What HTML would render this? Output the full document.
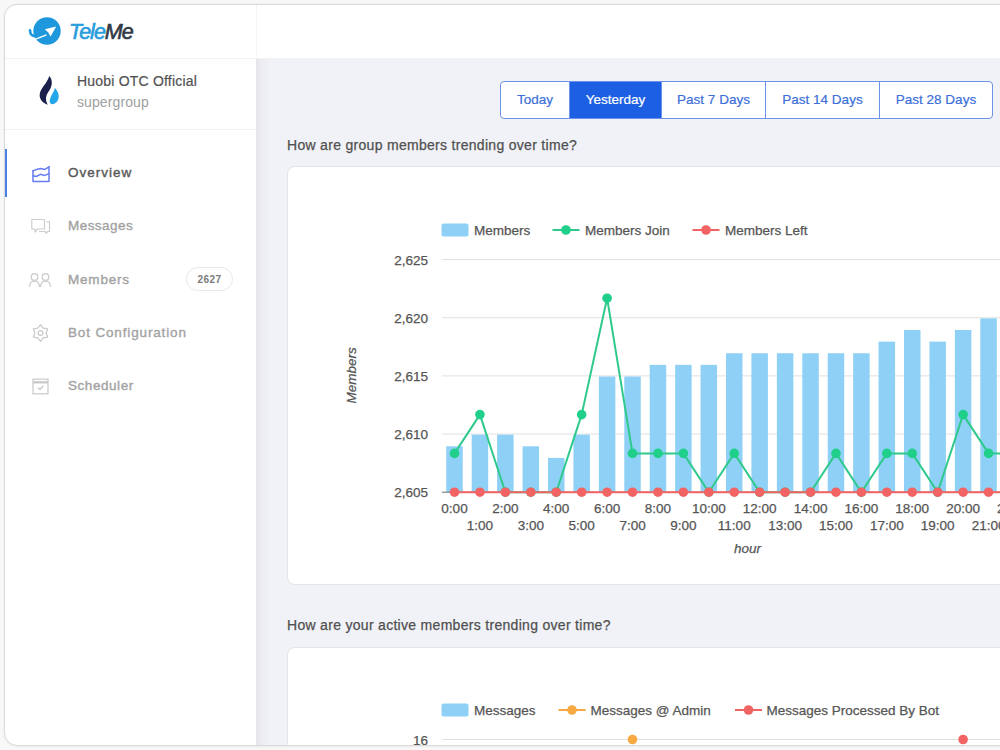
<!DOCTYPE html>
<html><head><meta charset="utf-8">
<style>
html,body{margin:0;padding:0;width:1000px;height:750px;overflow:hidden;background:#f8f8f8;font-family:"Liberation Sans",sans-serif;}
*{box-sizing:border-box;}
.abs{position:absolute;}
#frame{position:absolute;left:4px;top:4px;width:1200px;height:742px;border:1px solid #dadada;border-radius:13px;background:#fff;box-shadow:0 0 3px rgba(0,0,0,0.06);}
#hdrline{position:absolute;left:5px;top:58px;width:1000px;height:1px;background:#f2f2f2;}
#sideline{position:absolute;left:256px;top:5px;width:1px;height:54px;background:#f4f4f4;}
#main{position:absolute;left:257px;top:59px;width:743px;height:686px;background:#f1f2f7;}
#mainshadow{position:absolute;left:256px;top:59px;width:14px;height:686px;background:linear-gradient(to right,#e5e5e9,#ececf1 40%,#f1f2f7);}
#grpline{position:absolute;left:5px;top:129px;width:251px;height:1px;background:#f1f1f1;}
.brand{position:absolute;left:69px;top:19.5px;font-size:21.5px;font-style:italic;font-weight:normal;letter-spacing:-1px;-webkit-text-stroke:0.65px currentColor;}
.brand .t{color:#2a9ddc;}
.brand .m{color:#333a45;}
.gname{position:absolute;left:77px;top:73px;font-size:14px;letter-spacing:0.2px;-webkit-text-stroke:0.2px currentColor;color:#525252;white-space:nowrap;}
.gsub{position:absolute;left:77px;top:94px;font-size:14px;letter-spacing:0.1px;color:#a0a0a0;white-space:nowrap;}
.active{position:absolute;left:5px;top:149px;width:2px;height:48px;background:#4b82e8;}
.nav{position:absolute;left:67px;font-size:13.5px;font-weight:normal;-webkit-text-stroke:0.38px currentColor;color:#a3a3a3;letter-spacing:0.55px;white-space:nowrap;}
.nav.on{color:#585858;}
.badge{position:absolute;left:186px;top:267px;width:47px;height:24px;border:1.5px solid #e8e8e8;border-radius:12px;font-size:10px;font-weight:bold;color:#7a7a7a;text-align:center;line-height:23px;letter-spacing:0.5px;}
.btns{position:absolute;left:500px;top:81px;height:38px;display:flex;border:1px solid #6b93ea;border-radius:4px;overflow:hidden;background:#fff;}
.btn{height:36px;line-height:36px;font-size:13.5px;color:#3b6fd9;-webkit-text-stroke:0.2px currentColor;text-align:center;border-right:1px solid #6b93ea;white-space:nowrap;}
.btn:last-child{border-right:none;}
.btn.on{background:#1d5fe3;color:#fff;}
.q{position:absolute;left:287px;font-size:14px;letter-spacing:0.3px;-webkit-text-stroke:0.25px currentColor;color:#505050;white-space:nowrap;}
.card{position:absolute;left:287px;width:800px;background:#fff;border:1px solid #e4e5ea;border-radius:8px;}
svg{position:absolute;left:0;top:0;}
.ct{font-family:"Liberation Sans",sans-serif;font-size:13.5px;fill:#555;stroke:#555;stroke-width:0.25px;}
.it{font-style:italic;}
</style></head><body>
<div id="frame"></div>
<div id="main"></div>
<div id="mainshadow"></div>
<div id="hdrline"></div>
<div id="sideline"></div>
<div id="grpline"></div>

<!-- logo -->
<svg width="1000" height="750" style="pointer-events:none">
  <g>
    <circle cx="47" cy="31" r="13.7" fill="#1f97dc"/>
    <path d="M30 30.2 C30 34.5 32.5 36.6 37 36.4 L41 36" fill="none" stroke="#1f97dc" stroke-width="2.6" stroke-linecap="round"/>
    <path d="M35 39.3 L46.5 34.8" stroke="#fff" stroke-width="1.4"/>
    <path d="M44.8 29.2 L56.2 26.6 L50.6 36.5 L48.3 32.4 Z" fill="#fff"/>
  </g>
  <!-- huobi -->
  <path d="M49.3 76 C52.8 80 52.8 86 48.6 91.5 C45.5 96 45.2 100.5 47.8 104.7 C42.5 103 39.3 99 39.7 94.5 C40.2 88 47 84 49.3 76 Z" fill="#1b1f4b"/>
  <path d="M55 88 C57.5 91 59 94 58.7 97 C58.3 101.5 55 104.3 52 104.2 C50 104 49.3 101.5 49.9 99.5 C51 95 54 92 55 88 Z" fill="#23a6ea"/>
  <!-- nav icons -->
  <g fill="none" stroke="#687ef0" stroke-width="1.5" stroke-linejoin="round" stroke-linecap="round">
    <path d="M33 170.8 L33 181.5 L49 181.5 L49 166.8"/>
    <path d="M33 170.8 L36.4 169.6 L40.4 168.6 L44.8 169.4 L49 166.8"/>
    <path d="M33 175.8 L36.2 176.5 L40.4 174.3 L44.8 175.4 L49 173.6"/>
  </g>
  <g fill="none" stroke="#cdcdcd" stroke-width="1.2" stroke-linejoin="round">
    <path d="M31.8 219.5 L44.5 219.5 L44.5 229 L37.5 229 L35 232 L35 229 L31.8 229 Z"/>
    <path d="M46.5 221.8 L49.5 221.8 L49.5 231.5 L47.5 231.5 L46.5 233.3 L44.8 231.5 L39 231.5"/>
  </g>
  <g fill="none" stroke="#cbcbcb" stroke-width="1.25">
    <circle cx="34.5" cy="277" r="3.3"/>
    <path d="M29.5 287 C29.5 282.5 31.5 281 34.5 281 C37.5 281 39.5 282.5 39.5 287"/>
    <circle cx="45.5" cy="277" r="3.3"/>
    <path d="M40.5 287 C40.5 282.5 42.5 281 45.5 281 C48.5 281 50.5 282.5 50.5 287"/>
  </g>
  <g fill="none" stroke="#cbcbcb" stroke-width="1.25">
    <path d="M40.50 324.70 L43.30 328.15 L47.69 328.85 L46.10 333.00 L47.69 337.15 L43.30 337.85 L40.50 341.30 L37.70 337.85 L33.31 337.15 L34.90 333.00 L33.31 328.85 L37.70 328.15 Z" stroke-linejoin="round"/>
    <circle cx="40.5" cy="333" r="2.4"/>
  </g>
  <g fill="none" stroke="#cbcbcb" stroke-width="1.25">
    <rect x="33" y="379.2" width="15" height="14.6"/>
    <path d="M33 382.3 L48 382.3" stroke-width="2.4"/>
    <path d="M38 387.5 L40 389.5 L43.5 385.8" stroke-width="1.5"/>
  </g>
</svg>

<div class="brand"><span class="t">Tele</span><span class="m">Me</span></div>
<div class="gname">Huobi OTC Official</div>
<div class="gsub">supergroup</div>

<div class="active"></div>
<div class="nav on" style="top:165px;left:68px;letter-spacing:1.0px">Overview</div>
<div class="nav" style="top:218px;left:68px;letter-spacing:0.45px">Messages</div>
<div class="nav" style="top:272px;left:68px;letter-spacing:0.8px">Members</div>
<div class="badge">2627</div>
<div class="nav" style="top:325px;left:68px;letter-spacing:0.85px">Bot Configuration</div>
<div class="nav" style="top:378px;left:68px;letter-spacing:0.55px">Scheduler</div>

<div class="btns">
  <div class="btn" style="width:69px">Today</div>
  <div class="btn on" style="width:92px">Yesterday</div>
  <div class="btn" style="width:104px">Past 7 Days</div>
  <div class="btn" style="width:114px">Past 14 Days</div>
  <div class="btn" style="width:112px">Past 28 Days</div>
</div>

<div class="q" style="top:137px">How are group members trending over time?</div>
<div class="card" style="top:166px;height:419px"></div>
<div class="q" style="top:617px">How are your active members trending over time?</div>
<div class="card" style="top:647px;height:120px"></div>

<svg width="1000" height="745" viewBox="0 0 1000 745">
<line x1="441.8" y1="259.6" x2="1060" y2="259.6" stroke="#e0e0e0" stroke-width="1"/>
<line x1="441.8" y1="317.75" x2="1060" y2="317.75" stroke="#e0e0e0" stroke-width="1"/>
<line x1="441.8" y1="375.9" x2="1060" y2="375.9" stroke="#e0e0e0" stroke-width="1"/>
<line x1="441.8" y1="434.05" x2="1060" y2="434.05" stroke="#e0e0e0" stroke-width="1"/>
<text x="428" y="264.6" text-anchor="end" class="ct">2,625</text>
<text x="428" y="322.8" text-anchor="end" class="ct">2,620</text>
<text x="428" y="380.9" text-anchor="end" class="ct">2,615</text>
<text x="428" y="439.1" text-anchor="end" class="ct">2,610</text>
<text x="428" y="497.2" text-anchor="end" class="ct">2,605</text>
<rect x="446.26" y="446.28" width="16.5" height="45.92" fill="#8fd1f6"/>
<rect x="471.69" y="434.65" width="16.5" height="57.55" fill="#8fd1f6"/>
<rect x="497.12" y="434.65" width="16.5" height="57.55" fill="#8fd1f6"/>
<rect x="522.56" y="446.28" width="16.5" height="45.92" fill="#8fd1f6"/>
<rect x="547.99" y="457.91" width="16.5" height="34.29" fill="#8fd1f6"/>
<rect x="573.41" y="434.65" width="16.5" height="57.55" fill="#8fd1f6"/>
<rect x="598.85" y="376.50" width="16.5" height="115.70" fill="#8fd1f6"/>
<rect x="624.27" y="376.50" width="16.5" height="115.70" fill="#8fd1f6"/>
<rect x="649.71" y="364.87" width="16.5" height="127.33" fill="#8fd1f6"/>
<rect x="675.13" y="364.87" width="16.5" height="127.33" fill="#8fd1f6"/>
<rect x="700.57" y="364.87" width="16.5" height="127.33" fill="#8fd1f6"/>
<rect x="726.00" y="353.24" width="16.5" height="138.96" fill="#8fd1f6"/>
<rect x="751.42" y="353.24" width="16.5" height="138.96" fill="#8fd1f6"/>
<rect x="776.86" y="353.24" width="16.5" height="138.96" fill="#8fd1f6"/>
<rect x="802.29" y="353.24" width="16.5" height="138.96" fill="#8fd1f6"/>
<rect x="827.72" y="353.24" width="16.5" height="138.96" fill="#8fd1f6"/>
<rect x="853.14" y="353.24" width="16.5" height="138.96" fill="#8fd1f6"/>
<rect x="878.58" y="341.61" width="16.5" height="150.59" fill="#8fd1f6"/>
<rect x="904.00" y="329.98" width="16.5" height="162.22" fill="#8fd1f6"/>
<rect x="929.43" y="341.61" width="16.5" height="150.59" fill="#8fd1f6"/>
<rect x="954.87" y="329.98" width="16.5" height="162.22" fill="#8fd1f6"/>
<rect x="980.30" y="318.35" width="16.5" height="173.85" fill="#8fd1f6"/>
<rect x="1005.72" y="318.35" width="16.5" height="173.85" fill="#8fd1f6"/>
<rect x="1031.15" y="318.35" width="16.5" height="173.85" fill="#8fd1f6"/>
<line x1="441.8" y1="492.2" x2="1060" y2="492.2" stroke="#6e6e6e" stroke-width="1"/>
<polyline points="454.51,453.40 479.94,414.60 505.38,492.20 530.81,492.20 556.24,492.20 581.66,414.60 607.10,298.20 632.52,453.40 657.96,453.40 683.38,453.40 708.82,492.20 734.25,453.40 759.67,492.20 785.11,492.20 810.54,492.20 835.97,453.40 861.39,492.20 886.83,453.40 912.25,453.40 937.68,492.20 963.12,414.60 988.55,453.40 1013.97,453.40 1039.40,453.40" fill="none" stroke="#2fc98b" stroke-width="2" stroke-linejoin="round"/>
<circle cx="454.51" cy="453.40" r="4.8" fill="#1fcf8a"/>
<circle cx="479.94" cy="414.60" r="4.8" fill="#1fcf8a"/>
<circle cx="505.38" cy="492.20" r="4.8" fill="#1fcf8a"/>
<circle cx="530.81" cy="492.20" r="4.8" fill="#1fcf8a"/>
<circle cx="556.24" cy="492.20" r="4.8" fill="#1fcf8a"/>
<circle cx="581.66" cy="414.60" r="4.8" fill="#1fcf8a"/>
<circle cx="607.10" cy="298.20" r="4.8" fill="#1fcf8a"/>
<circle cx="632.52" cy="453.40" r="4.8" fill="#1fcf8a"/>
<circle cx="657.96" cy="453.40" r="4.8" fill="#1fcf8a"/>
<circle cx="683.38" cy="453.40" r="4.8" fill="#1fcf8a"/>
<circle cx="708.82" cy="492.20" r="4.8" fill="#1fcf8a"/>
<circle cx="734.25" cy="453.40" r="4.8" fill="#1fcf8a"/>
<circle cx="759.67" cy="492.20" r="4.8" fill="#1fcf8a"/>
<circle cx="785.11" cy="492.20" r="4.8" fill="#1fcf8a"/>
<circle cx="810.54" cy="492.20" r="4.8" fill="#1fcf8a"/>
<circle cx="835.97" cy="453.40" r="4.8" fill="#1fcf8a"/>
<circle cx="861.39" cy="492.20" r="4.8" fill="#1fcf8a"/>
<circle cx="886.83" cy="453.40" r="4.8" fill="#1fcf8a"/>
<circle cx="912.25" cy="453.40" r="4.8" fill="#1fcf8a"/>
<circle cx="937.68" cy="492.20" r="4.8" fill="#1fcf8a"/>
<circle cx="963.12" cy="414.60" r="4.8" fill="#1fcf8a"/>
<circle cx="988.55" cy="453.40" r="4.8" fill="#1fcf8a"/>
<circle cx="1013.97" cy="453.40" r="4.8" fill="#1fcf8a"/>
<circle cx="1039.40" cy="453.40" r="4.8" fill="#1fcf8a"/>
<line x1="454.515" y1="492.2" x2="1060" y2="492.2" stroke="#f26464" stroke-width="2.1"/>
<circle cx="454.51" cy="492.2" r="4.8" fill="#f26464"/>
<circle cx="479.94" cy="492.2" r="4.8" fill="#f26464"/>
<circle cx="505.38" cy="492.2" r="4.8" fill="#f26464"/>
<circle cx="530.81" cy="492.2" r="4.8" fill="#f26464"/>
<circle cx="556.24" cy="492.2" r="4.8" fill="#f26464"/>
<circle cx="581.66" cy="492.2" r="4.8" fill="#f26464"/>
<circle cx="607.10" cy="492.2" r="4.8" fill="#f26464"/>
<circle cx="632.52" cy="492.2" r="4.8" fill="#f26464"/>
<circle cx="657.96" cy="492.2" r="4.8" fill="#f26464"/>
<circle cx="683.38" cy="492.2" r="4.8" fill="#f26464"/>
<circle cx="708.82" cy="492.2" r="4.8" fill="#f26464"/>
<circle cx="734.25" cy="492.2" r="4.8" fill="#f26464"/>
<circle cx="759.67" cy="492.2" r="4.8" fill="#f26464"/>
<circle cx="785.11" cy="492.2" r="4.8" fill="#f26464"/>
<circle cx="810.54" cy="492.2" r="4.8" fill="#f26464"/>
<circle cx="835.97" cy="492.2" r="4.8" fill="#f26464"/>
<circle cx="861.39" cy="492.2" r="4.8" fill="#f26464"/>
<circle cx="886.83" cy="492.2" r="4.8" fill="#f26464"/>
<circle cx="912.25" cy="492.2" r="4.8" fill="#f26464"/>
<circle cx="937.68" cy="492.2" r="4.8" fill="#f26464"/>
<circle cx="963.12" cy="492.2" r="4.8" fill="#f26464"/>
<circle cx="988.55" cy="492.2" r="4.8" fill="#f26464"/>
<circle cx="1013.97" cy="492.2" r="4.8" fill="#f26464"/>
<circle cx="1039.40" cy="492.2" r="4.8" fill="#f26464"/>
<text x="454.51" y="512.9" text-anchor="middle" class="ct">0:00</text>
<text x="479.94" y="530.1" text-anchor="middle" class="ct">1:00</text>
<text x="505.38" y="512.9" text-anchor="middle" class="ct">2:00</text>
<text x="530.81" y="530.1" text-anchor="middle" class="ct">3:00</text>
<text x="556.24" y="512.9" text-anchor="middle" class="ct">4:00</text>
<text x="581.66" y="530.1" text-anchor="middle" class="ct">5:00</text>
<text x="607.10" y="512.9" text-anchor="middle" class="ct">6:00</text>
<text x="632.52" y="530.1" text-anchor="middle" class="ct">7:00</text>
<text x="657.96" y="512.9" text-anchor="middle" class="ct">8:00</text>
<text x="683.38" y="530.1" text-anchor="middle" class="ct">9:00</text>
<text x="708.82" y="512.9" text-anchor="middle" class="ct">10:00</text>
<text x="734.25" y="530.1" text-anchor="middle" class="ct">11:00</text>
<text x="759.67" y="512.9" text-anchor="middle" class="ct">12:00</text>
<text x="785.11" y="530.1" text-anchor="middle" class="ct">13:00</text>
<text x="810.54" y="512.9" text-anchor="middle" class="ct">14:00</text>
<text x="835.97" y="530.1" text-anchor="middle" class="ct">15:00</text>
<text x="861.39" y="512.9" text-anchor="middle" class="ct">16:00</text>
<text x="886.83" y="530.1" text-anchor="middle" class="ct">17:00</text>
<text x="912.25" y="512.9" text-anchor="middle" class="ct">18:00</text>
<text x="937.68" y="530.1" text-anchor="middle" class="ct">19:00</text>
<text x="963.12" y="512.9" text-anchor="middle" class="ct">20:00</text>
<text x="988.55" y="530.1" text-anchor="middle" class="ct">21:00</text>
<text x="1013.97" y="512.9" text-anchor="middle" class="ct">22:00</text>
<text x="1039.40" y="530.1" text-anchor="middle" class="ct">23:00</text>
<text x="747.5" y="553" text-anchor="middle" class="ct it">hour</text>
<text transform="translate(355.5,375.3) rotate(-90)" text-anchor="middle" class="ct it">Members</text>
<rect x="441.5" y="223.5" width="27" height="13" rx="2" fill="#8fd1f6"/>
<text x="474" y="234.8" class="ct">Members</text>
<line x1="552.5" y1="230" x2="579.5" y2="230" stroke="#2fc98b" stroke-width="2"/>
<circle cx="566" cy="230" r="4.8" fill="#1fcf8a"/>
<text x="585" y="234.8" class="ct">Members Join</text>
<line x1="692.5" y1="230" x2="719.5" y2="230" stroke="#f26464" stroke-width="2"/>
<circle cx="706" cy="230" r="4.8" fill="#f26464"/>
<text x="725" y="234.8" class="ct">Members Left</text>
<rect x="441.5" y="703.5" width="27" height="13" rx="2" fill="#8fd1f6"/>
<text x="474" y="714.8" class="ct">Messages</text>
<line x1="558.5" y1="710" x2="585.5" y2="710" stroke="#f7a942" stroke-width="2"/>
<circle cx="572" cy="710" r="4.8" fill="#f7a942"/>
<text x="590.5" y="714.8" class="ct">Messages @ Admin</text>
<line x1="735" y1="710" x2="762" y2="710" stroke="#f26464" stroke-width="2"/>
<circle cx="748.5" cy="710" r="4.8" fill="#f26464"/>
<text x="766.5" y="714.8" class="ct">Messages Processed By Bot</text>
<line x1="441.8" y1="739.5" x2="1060" y2="739.5" stroke="#e0e0e0" stroke-width="1"/>
<text x="428" y="744.5" text-anchor="end" class="ct">16</text>
<circle cx="632.52" cy="739.5" r="4.8" fill="#f7a942"/>
<circle cx="963.12" cy="739.5" r="4.8" fill="#f26464"/>
</svg>
<div style="position:absolute;left:17px;top:745px;width:983px;height:5px;background:#f8f8f8;"></div>
<div style="position:absolute;left:17px;top:745px;width:983px;height:1px;background:#dadada;"></div>
<div style="position:absolute;left:17px;top:746px;width:983px;height:2px;background:linear-gradient(#ececec,#f8f8f8);"></div>
</body></html>
